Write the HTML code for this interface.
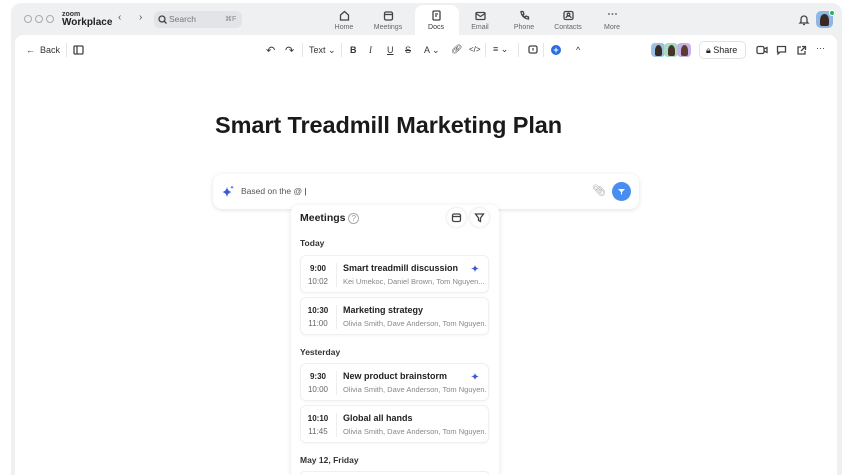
<!DOCTYPE html>
<html style="width:850px;height:475px;overflow:hidden"><head><meta charset="utf-8"><style>
*{box-sizing:border-box;margin:0;padding:0}
body{width:850px;height:475px;background:#fff;font-family:"Liberation Sans",sans-serif;color:#222;position:relative;overflow:hidden}
.a{position:absolute}
.win{left:11px;top:3px;width:831px;height:472px;background:#eef0f2;border-radius:10px 10px 0 0}
.content{left:15px;top:35px;width:822px;height:440px;background:#fff;border-radius:8px 8px 0 0}
.tab{font-size:7px;color:#666;text-align:center;width:44px}
.tab svg{display:block;margin:0 auto 3px}
.ic{stroke:#444;fill:none;stroke-width:1.3}
.tb{font-size:9px;color:#333}
.card{left:300px;width:189px;height:38px;background:#fff;border:1px solid #eef0f2;border-radius:6px;box-shadow:0 1px 2px rgba(0,0,0,.04)}
.t1{position:absolute;left:0;width:34px;text-align:center;font-size:8px;font-weight:bold;top:8px;color:#222}
.t2{position:absolute;left:0;width:34px;text-align:center;font-size:8px;color:#666;top:21px}
.sep{position:absolute;left:35px;top:7px;width:1px;height:24px;background:#eee}
.tt{position:absolute;left:42px;top:7px;font-size:9px;font-weight:bold;color:#222}
.ts{position:absolute;left:42px;top:21px;font-size:7.5px;color:#888;white-space:nowrap;width:143px;overflow:hidden}
.sec{font-size:8.5px;font-weight:bold;color:#333;left:300px}
</style></head><body>
<div class="a win"></div>
<div class="a" style="left:24px;top:15px;width:8px;height:8px;border:1px solid #aaa;border-radius:50%"></div>
<div class="a" style="left:35px;top:15px;width:8px;height:8px;border:1px solid #aaa;border-radius:50%"></div>
<div class="a" style="left:46px;top:15px;width:8px;height:8px;border:1px solid #aaa;border-radius:50%"></div>
<div class="a" style="left:62px;top:11px;font-size:7px;font-weight:bold;color:#333;line-height:7px">zoom</div>
<div class="a" style="left:62px;top:17px;font-size:10px;font-weight:bold;color:#222">Workplace</div>
<div class="a" style="left:118px;top:12px;font-size:10px;color:#555">‹</div>
<div class="a" style="left:139px;top:12px;font-size:10px;color:#555">›</div>
<div class="a" style="left:154px;top:11px;width:88px;height:17px;background:#e2e4e8;border-radius:6px"></div>
<svg class="a" style="left:158px;top:15px" width="9" height="9"><circle cx="4" cy="4" r="3" class="ic" stroke="#666"/><path d="M6 6l2.5 2.5" class="ic"/></svg>
<div class="a" style="left:169px;top:14px;font-size:8.5px;color:#777">Search</div>
<div class="a" style="left:225px;top:15px;font-size:7px;color:#888">⌘F</div>
<div class="a" style="left:415px;top:5px;width:44px;height:32px;background:#fff;border-radius:8px 8px 0 0"></div>
<div class="a tab" style="left:322px;top:10px"><svg width="11" height="11"><path d="M1.5 5L5.5 1.5 9.5 5V10H1.5Z" class="ic" stroke="#555"/></svg>Home</div>
<div class="a tab" style="left:366px;top:10px"><svg width="11" height="11"><rect x="1.5" y="2" width="8" height="8" rx="1.5" class="ic" stroke="#555"/><path d="M1.5 4.5h8" class="ic" stroke="#555"/></svg>Meetings</div>
<div class="a tab" style="left:414px;top:10px;color:#333"><svg width="11" height="11"><rect x="2" y="1" width="7" height="9" rx="1" class="ic" stroke="#333"/><path d="M4 4h3M4 6h2" class="ic" stroke="#333"/></svg>Docs</div>
<div class="a tab" style="left:458px;top:10px"><svg width="11" height="11"><rect x="1" y="2.5" width="9" height="7" rx="1" class="ic" stroke="#555"/><path d="M1 3.5l4.5 3 4.5-3" class="ic" stroke="#555"/></svg>Email</div>
<div class="a tab" style="left:502px;top:10px"><svg width="11" height="11"><path d="M2 1.5l2 0 1 2.5-1.3 1a6 6 0 0 0 2.3 2.3l1-1.3 2.5 1v2A8 8 0 0 1 2 1.5z" class="ic" stroke="#555"/></svg>Phone</div>
<div class="a tab" style="left:546px;top:10px"><svg width="11" height="11"><rect x="1" y="1.5" width="9" height="8" rx="1.5" class="ic" stroke="#555"/><circle cx="5.5" cy="4.5" r="1.3" class="ic" stroke="#555"/><path d="M3 8a2.5 2 0 0 1 5 0" class="ic" stroke="#555"/></svg>Contacts</div>
<div class="a tab" style="left:590px;top:10px"><svg width="11" height="11"><circle cx="2" cy="4" r=".9" fill="#555"/><circle cx="5.5" cy="4" r=".9" fill="#555"/><circle cx="9" cy="4" r=".9" fill="#555"/></svg>More</div>
<svg class="a" style="left:798px;top:13px" width="12" height="13"><path d="M3 9V6a3 3 0 0 1 6 0v3l1 1H2z M5 11.5h2" class="ic" stroke="#555"/></svg>
<div class="a" style="left:816px;top:11px;width:17px;height:17px;border-radius:5px;background:#8fb6e6;overflow:hidden"><div style="margin:3px 0 0 4px;width:9px;height:12px;border-radius:50% 50% 2px 2px;background:#3a2a22"></div></div>
<div class="a" style="left:829px;top:10px;width:6px;height:6px;border-radius:50%;background:#1db954;border:1px solid #fff"></div>

<div class="a content"></div>
<div class="a tb" style="left:26px;top:45px;font-size:9px">←&nbsp; Back</div>
<div class="a" style="left:66px;top:43px;width:1px;height:14px;background:#e5e5e5"></div>
<svg class="a" style="left:73px;top:45px" width="11" height="10"><rect x="1" y="1" width="9" height="8" rx="1" class="ic"/><path d="M4 1v8" class="ic"/></svg>
<div class="a tb" style="left:266px;top:44px;font-size:11px">↶</div>
<div class="a tb" style="left:285px;top:44px;font-size:11px">↷</div>
<div class="a" style="left:302px;top:43px;width:1px;height:14px;background:#e5e5e5"></div>
<div class="a tb" style="left:309px;top:45px">Text ⌄</div>
<div class="a" style="left:341px;top:43px;width:1px;height:14px;background:#e5e5e5"></div>
<div class="a tb" style="left:350px;top:45px;font-weight:bold">B</div>
<div class="a tb" style="left:369px;top:45px;font-style:italic;font-family:'Liberation Serif'">I</div>
<div class="a tb" style="left:387px;top:45px;text-decoration:underline">U</div>
<div class="a tb" style="left:405px;top:45px;text-decoration:line-through">S</div>
<div class="a tb" style="left:424px;top:45px">A ⌄</div>
<div class="a tb" style="left:451px;top:44px">🔗︎</div>
<div class="a tb" style="left:469px;top:45px;font-size:8px">&lt;/&gt;</div>
<div class="a" style="left:485px;top:43px;width:1px;height:14px;background:#e5e5e5"></div>
<div class="a tb" style="left:493px;top:44px">≡ ⌄</div>
<div class="a" style="left:518px;top:43px;width:1px;height:14px;background:#e5e5e5"></div>
<svg class="a" style="left:528px;top:45px" width="10" height="10"><rect x="1" y="1" width="8" height="7" rx="1.5" class="ic"/><path d="M5 3v2.5" class="ic"/></svg>
<div class="a" style="left:543px;top:43px;width:1px;height:14px;background:#e5e5e5"></div>
<div class="a" style="left:551px;top:45px;width:10px;height:10px;border-radius:50%;background:#2a6de0;color:#fff;font-size:9px;line-height:10px;text-align:center;font-weight:bold">+</div>
<div class="a tb" style="left:576px;top:45px">^</div>
<div class="a" style="left:651px;top:43px;width:14px;height:14px;border-radius:4px;background:#9cc0ea"></div>
<div class="a" style="left:664px;top:43px;width:14px;height:14px;border-radius:4px;background:#a9dcc0"></div>
<div class="a" style="left:677px;top:43px;width:14px;height:14px;border-radius:4px;background:#c9b0e6"></div>
<div class="a" style="left:655px;top:45px;width:7px;height:11px;border-radius:50% 50% 2px 2px;background:#3a2a22"></div>
<div class="a" style="left:668px;top:45px;width:7px;height:11px;border-radius:50% 50% 2px 2px;background:#4a3328"></div>
<div class="a" style="left:681px;top:45px;width:7px;height:11px;border-radius:50% 50% 2px 2px;background:#5a3d2e"></div>
<div class="a" style="left:699px;top:41px;width:47px;height:18px;border:1px solid #e3e3e3;border-radius:5px;font-size:9px;padding:3px 0 0 6px;color:#222">🔒︎ Share</div>
<svg class="a" style="left:756px;top:45px" width="12" height="10"><rect x="1" y="1.5" width="7" height="7" rx="1.5" class="ic"/><path d="M8 4l3-1.5v5L8 6" class="ic"/></svg>
<svg class="a" style="left:776px;top:45px" width="11" height="10"><path d="M1.5 1.5h8v5.5H4L2 9V7h-.5z" class="ic"/></svg>
<svg class="a" style="left:796px;top:45px" width="11" height="11"><path d="M5 2H2v7h7V6M6 1.5h3.5V5M9.5 1.5 5 6" class="ic"/></svg>
<div class="a tb" style="left:816px;top:43px">···</div>

<div class="a" style="left:215px;top:112px;font-size:23.5px;font-weight:bold;color:#1a1a1a;letter-spacing:-.1px">Smart Treadmill Marketing Plan</div>

<div class="a" style="left:213px;top:174px;width:426px;height:35px;background:#fff;border-radius:9px;box-shadow:0 1px 5px rgba(0,0,0,.12)"></div>
<svg class="a" style="left:221px;top:185px" width="14" height="13"><path d="M6 2Q6.7 6 10.5 7 6.7 8 6 12 5.3 8 1.5 7 5.3 6 6 2z" fill="#3a5bd8"/><path d="M11 .5Q11.3 2 12.8 2.3 11.3 2.6 11 4 10.7 2.6 9.2 2.3 10.7 2 11 .5z" fill="#5b7ae8"/></svg>
<div class="a" style="left:241px;top:186px;font-size:8.5px;color:#555">Based on the @ <span style="color:#222">|</span></div>
<div class="a" style="left:592px;top:184px;font-size:11px;color:#aaa">📎︎</div>
<div class="a" style="left:612px;top:182px;width:19px;height:19px;border-radius:50%;background:#4a8df0"></div>
<svg class="a" style="left:616px;top:186px" width="11" height="11"><path d="M2 3h7L6 6v3L5 8V6z" fill="#fff"/></svg>

<div class="a" style="left:291px;top:205px;width:208px;height:270px;background:#fff;border-radius:8px 8px 0 0;box-shadow:0 1px 6px rgba(0,0,0,.1)"></div>
<div class="a" style="left:300px;top:212px;font-size:10.5px;font-weight:bold;color:#222">Meetings <span style="font-size:8px;color:#999;font-weight:normal;border:1px solid #aaa;border-radius:50%;padding:0 2px">?</span></div>
<div class="a" style="left:447px;top:208px;width:19px;height:19px;border-radius:50%;box-shadow:0 0 3px rgba(0,0,0,.15)"></div>
<svg class="a" style="left:451px;top:212px" width="11" height="11"><rect x="1.5" y="2" width="8" height="7.5" rx="1.5" class="ic"/><path d="M1.5 4.5h8" class="ic"/></svg>
<div class="a" style="left:470px;top:208px;width:19px;height:19px;border-radius:50%;box-shadow:0 0 3px rgba(0,0,0,.15)"></div>
<svg class="a" style="left:474px;top:212px" width="11" height="11"><path d="M1.5 2h8L6.5 6v3.5L4.5 8.5V6z" class="ic"/></svg>

<div class="a sec" style="top:238px">Today</div>
<div class="a card" style="top:255px"><div class="t1">9:00</div><div class="t2">10:02</div><div class="sep"></div><div class="tt">Smart treadmill discussion</div><div class="ts">Kei Umekoc, Daniel Brown, Tom Nguyen...</div><svg style="position:absolute;right:8px;top:8px" width="9" height="9"><path d="M4 1Q4.5 4 8 4.5 4.5 5 4 8 3.5 5 0 4.5 3.5 4 4 1z" fill="#3a5bd8"/></svg></div>
<div class="a card" style="top:297px"><div class="t1">10:30</div><div class="t2">11:00</div><div class="sep"></div><div class="tt">Marketing strategy</div><div class="ts">Olivia Smith, Dave Anderson, Tom Nguyen...</div></div>
<div class="a sec" style="top:347px">Yesterday</div>
<div class="a card" style="top:363px"><div class="t1">9:30</div><div class="t2">10:00</div><div class="sep"></div><div class="tt">New product brainstorm</div><div class="ts">Olivia Smith, Dave Anderson, Tom Nguyen...</div><svg style="position:absolute;right:8px;top:8px" width="9" height="9"><path d="M4 1Q4.5 4 8 4.5 4.5 5 4 8 3.5 5 0 4.5 3.5 4 4 1z" fill="#3a5bd8"/></svg></div>
<div class="a card" style="top:405px"><div class="t1">10:10</div><div class="t2">11:45</div><div class="sep"></div><div class="tt">Global all hands</div><div class="ts">Olivia Smith, Dave Anderson, Tom Nguyen...</div></div>
<div class="a sec" style="top:455px">May 12, Friday</div>
<div class="a" style="left:300px;top:471px;width:189px;height:4px;border:1px solid #eef0f2;border-bottom:none;border-radius:6px 6px 0 0"></div>
</body></html>
